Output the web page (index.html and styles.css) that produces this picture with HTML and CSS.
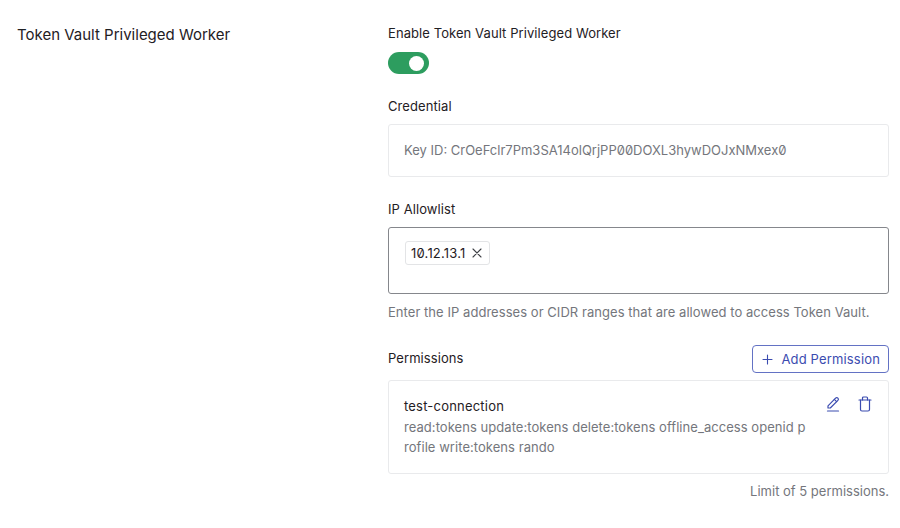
FILE: index.html
```html
<!DOCTYPE html>
<html lang="en">
    <head>
        <meta charset="UTF-8" />
        <title>Token Vault Privileged Worker</title>
        <link rel="stylesheet" href="styles.css">
    </head>
    <body>
        <div class="container">
            <!-- Left column: section title -->
            <h2 class="section-title">Token Vault Privileged Worker</h2>

            <!-- Right column: settings form -->
            <div class="settings">
                <div class="field field-enable">
                    <div class="field-label">Enable Token Vault Privileged Worker</div>
                    <div class="toggle"><span class="toggle-knob"></span></div>
                </div>

                <div class="field field-credential">
                    <div class="field-label">Credential</div>
                    <div class="credential-box">Key ID: CrOeFclr7Pm3SA14olQrjPP00DOXL3hywDOJxNMxex0</div>
                </div>

                <div class="field field-allowlist">
                    <div class="field-label">IP Allowlist</div>
                    <div class="tag-input">
                        <span class="tag"><span class="tag-text">10.12.13.1</span>
                            <svg class="tag-close" width="10" height="10" viewBox="0 0 10 10" fill="none" stroke="currentColor" stroke-width="1.1" stroke-linecap="round">
                                <path d="M1 1l8 8M9 1l-8 8" />
                            </svg>
                        </span>
                    </div>
                    <p class="hint">Enter the IP addresses or CIDR ranges that are allowed to access Token Vault.</p>
                </div>

                <div class="permissions-head">
                    <div class="field-label">Permissions</div>
                    <button class="add-btn" type="button">
                        <svg width="11" height="11" viewBox="0 0 11 11" fill="none" stroke="currentColor" stroke-width="1.1" stroke-linecap="round">
                            <path d="M5.5 1v9M1 5.5h9" />
                        </svg>
                        Add Permission
                    </button>
                </div>

                <div class="permission-card">
                    <div class="permission-text">
                        <div class="permission-name">test-connection</div>
                        <div class="permission-scopes">read:tokens update:tokens delete:tokens offline_access openid profile write:tokens rando</div>
                    </div>
                    <div class="permission-actions">
                        <svg width="16" height="16" viewBox="0 0 16 16" fill="none" stroke="currentColor" stroke-width="1.2" stroke-linecap="round" stroke-linejoin="round">
                            <path d="M3 9.8L10.6 2.1a1.6 1.6 0 0 1 2.3 2.3L5.3 12H3z" />
                            <path d="M9.3 3.4l2.3 2.3" />
                            <path d="M2.5 15h11" />
                        </svg>
                        <svg width="14" height="16" viewBox="0 0 14 16" fill="none" stroke="currentColor" stroke-width="1.2" stroke-linecap="round" stroke-linejoin="round">
                            <path d="M1 4h12" />
                            <path d="M4.5 4V2a1 1 0 0 1 1-1h3a1 1 0 0 1 1 1v2" />
                            <path d="M2.5 4v9.5A1.5 1.5 0 0 0 4 15h6a1.5 1.5 0 0 0 1.5-1.5V4" />
                        </svg>
                    </div>
                </div>

                <p class="limit">Limit of 5 permissions.</p>
            </div>
        </div>
    </body>
</html>
```

FILE: styles.css
```css
* {
  margin: 0;
  padding: 0;
  box-sizing: border-box;
  font-family: "Inter", "Liberation Sans", sans-serif;
  font-feature-settings: "zero";
}

body {
  background-color: #fff;
  color: #1f2024;
}

.container {
  display: flex;
  padding: 26px 11px 0 17px;
}

.section-title {
  width: 371px;
  font-size: 15px;
  line-height: 17px;
  font-weight: 400;
}

.settings {
  flex: 1;
}

.field-label {
  font-size: 13px;
  line-height: 16px;
  letter-spacing: 0.08px;
}

/* --- Toggle --- */
.field-enable {
  margin-top: -1px;
}

.toggle {
  width: 41px;
  height: 22px;
  margin-top: 11px;
  border-radius: 11px;
  background-color: #2d9d5f;
  display: flex;
  align-items: center;
  justify-content: flex-end;
  padding-right: 5px;
}

.toggle-knob {
  width: 15px;
  height: 15px;
  border-radius: 50%;
  background-color: #fff;
}

/* --- Credential --- */
.field-credential {
  margin-top: 24px;
}

.credential-box {
  margin-top: 10px;
  height: 53px;
  border: 1px solid #e9eaec;
  border-radius: 3px;
  padding: 0 15px 1px;
  display: flex;
  align-items: center;
  font-size: 13px;
  color: #74767c;
}

/* --- IP allowlist --- */
.field-allowlist {
  margin-top: 24px;
}

.tag-input {
  margin-top: 10px;
  height: 67px;
  border: 1px solid #85878c;
  border-radius: 3px;
  padding: 13px 16px;
}

.tag {
  display: inline-flex;
  align-items: center;
  gap: 6px;
  height: 24px;
  padding: 0 7px 0 5px;
  border: 1px solid #e3e4e6;
  border-radius: 3px;
  font-size: 13px;
  letter-spacing: 0.2px;
}

.tag-text {
  margin-top: -1px;
}

.tag-close {
  color: #3f4146;
}

.hint {
  margin-top: 10px;
  font-size: 13px;
  line-height: 16px;
  letter-spacing: 0.05px;
  color: #74767c;
}

/* --- Permissions --- */
.permissions-head {
  margin-top: 25px;
  display: flex;
  justify-content: space-between;
  align-items: center;
}

.permissions-head .field-label {
  margin-top: -2px;
}

.add-btn {
  display: flex;
  align-items: center;
  gap: 8px;
  height: 28px;
  padding: 0 8px 0 9px;
  background-color: #fff;
  border: 1px solid #6372c4;
  border-radius: 4px;
  color: #3b4cb0;
  font-size: 13px;
  letter-spacing: 0.16px;
}

.permission-card {
  margin-top: 7px;
  height: 94px;
  border: 1px solid #e9eaec;
  border-radius: 3px;
  padding: 17px 16px 0 15px;
  display: flex;
  justify-content: space-between;
}

.permission-text {
  width: 403px;
}

.permission-name {
  font-size: 13px;
  line-height: 17px;
  letter-spacing: 0.2px;
}

.permission-scopes {
  margin-top: 2px;
  font-size: 13px;
  line-height: 20px;
  letter-spacing: 0.05px;
  color: #74767c;
  word-break: break-all;
}

.permission-actions {
  display: flex;
  gap: 17px;
  margin-top: -2px;
  color: #3b4cb0;
}

.limit {
  margin-top: 9px;
  text-align: right;
  font-size: 13px;
  line-height: 16px;
  color: #74767c;
}
```
